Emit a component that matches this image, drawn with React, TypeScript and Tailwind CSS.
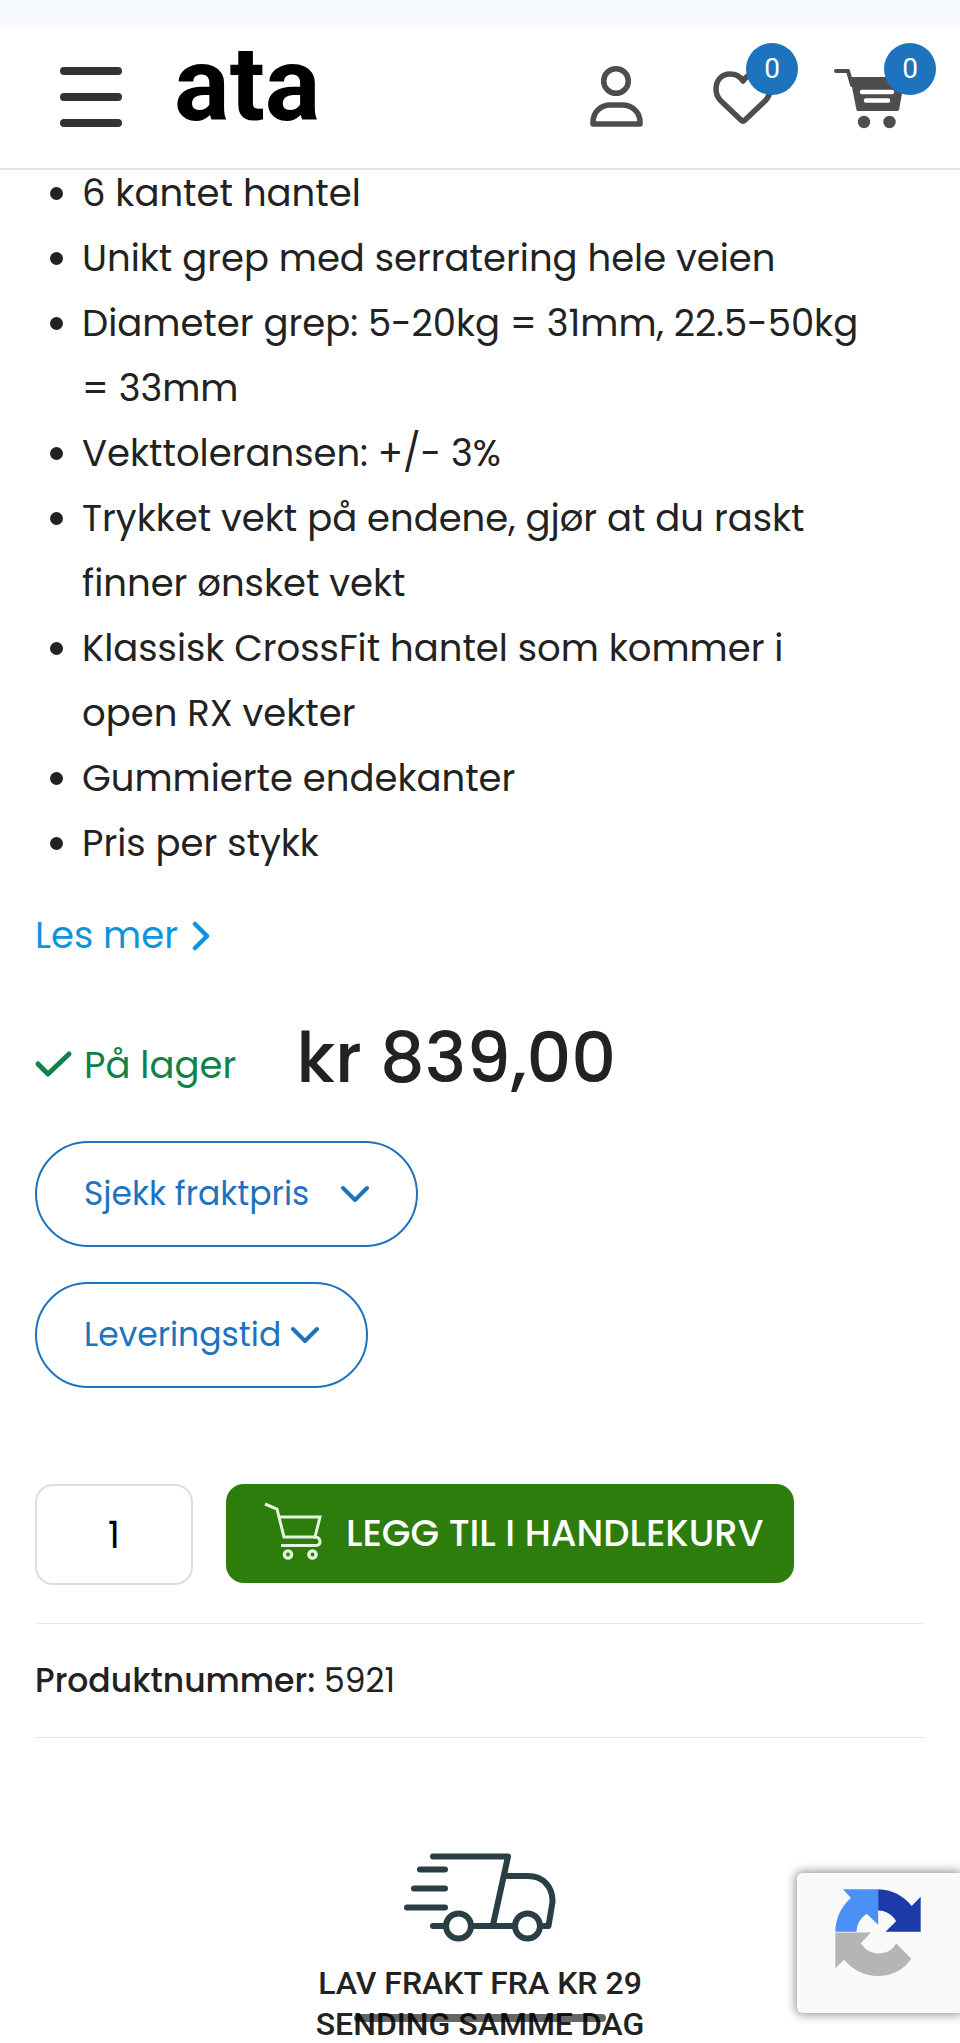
import type { ReactNode } from "react";

const features = [
  "6 kantet hantel",
  "Unikt grep med serratering hele veien",
  "Diameter grep: 5-20kg = 31mm, 22.5-50kg = 33mm",
  "Vekttoleransen: +/- 3%",
  "Trykket vekt på endene, gjør at du raskt finner ønsket vekt",
  "Klassisk CrossFit hantel som kommer i open RX vekter",
  "Gummierte endekanter",
  "Pris per stykk",
];

function Badge({ count, className }: { count: number; className: string }) {
  return (
    <span
      className={`absolute -top-[22px] flex size-[52px] items-center justify-center rounded-full bg-[#1e73be] font-['Roboto',sans-serif] text-[28px] leading-none text-white ${className}`}
    >
      {count}
    </span>
  );
}

function UserIcon() {
  return (
    <svg className="h-16 w-[54px]" viewBox="0 0 54 64" fill="none" stroke="#4d4d4d" strokeWidth="5.5" strokeLinejoin="round">
      <circle cx="26" cy="16" r="12.3" />
      <path d="M3 59 V57 C3 47 11 40 20 40 H32 C42 40 50 47 50 57 V59 Z" />
    </svg>
  );
}

function HeartIcon() {
  return (
    <svg className="h-16 w-[60px]" viewBox="0 0 60 64" fill="none" stroke="#4d4d4d" strokeWidth="5.5" strokeLinejoin="round">
      <path d="M30 16 C27 11 22 9 17 9 C9 9 3 15 3 24 C3 29 5 33 8 36 L28 55 Q30 57 32 55 L52 36 C55 33 57 29 57 24 C57 15 51 9 43 9 C38 9 33 11 30 16 Z" />
    </svg>
  );
}

function CartIcon() {
  return (
    <svg className="h-16 w-[72px]" viewBox="0 0 72 64" fill="none" strokeLinecap="round">
      <path d="M2 6 H14 L18 20" stroke="#4d4d4d" strokeWidth="4" strokeLinejoin="round" />
      <path d="M16 12 H71 L65 45 Q64.5 46 63 46 H24 Q23 46 22.5 45 Z" fill="#4d4d4d" />
      <path d="M28 27 H58 M32 35.5 H54" stroke="#fff" strokeWidth="4.5" />
      <circle cx="30" cy="57" r="6.2" fill="#4d4d4d" />
      <circle cx="55.5" cy="57" r="6.2" fill="#4d4d4d" />
    </svg>
  );
}

function ButtonCartIcon() {
  return (
    <svg className="h-[58px] w-[57px] overflow-visible" viewBox="0 0 57 58" fill="none" stroke="#e6f3df" strokeWidth="3">
      <path d="M0 -1 L12 4 L19 32 H51" />
      <path d="M15 12 H55 L50 32 C54 32 55 35 55 37 C55 39.5 53 40.5 50 40.5 H16" />
      <circle cx="23" cy="49.5" r="3.6" strokeWidth="3.4" />
      <circle cx="47.5" cy="49.5" r="3.6" strokeWidth="3.4" />
    </svg>
  );
}

function TruckIcon() {
  return (
    <svg className="h-[90px] w-[152px]" viewBox="0 0 152 90" fill="none" stroke="#2a3e45" strokeWidth="6" strokeLinecap="round" strokeLinejoin="round">
      <path d="M29 3.5 H104 L89 72" />
      <path d="M16 16.5 H41 M10 35.5 H41 M3 54.5 H41" />
      <path d="M29 73 H39 M71 73 H109 M140 73 H144.5 L148.5 49 C149 34 139 23 124 23 H102" />
      <circle cx="54.5" cy="73" r="12.5" />
      <circle cx="123.5" cy="73" r="12.5" />
    </svg>
  );
}

function RecaptchaIcon() {
  return (
    <svg className="size-[87px]" viewBox="225 145 260 262">
      <path fill="#4a90f5" d="M248 146 H354 V253 L320 220 C300 232 290 250 289 274 H225 C226 235 240 200 272 172 Z" />
      <path fill="#1c3aa9" d="M354 146 C395 147 430 165 455 196 L482 168 V274 H376 L408 242 C397 222 378 211 354 210 Z" />
      <path fill="#b5b5b5" d="M225 276 H332 L302 308 C315 328 335 339 355 339 C378 339 398 328 408 308 L454 355 C430 390 395 407 352 407 C312 406 278 390 252 358 L225 384 Z" />
    </svg>
  );
}

function ChevronDown() {
  return (
    <svg className="h-[18px] w-7" viewBox="0 0 28 18" fill="none" stroke="currentColor" strokeWidth="4" strokeLinecap="round" strokeLinejoin="round">
      <path d="M2 3 L14 15 L26 3" />
    </svg>
  );
}

function PillButton({ children, className }: { children: ReactNode; className: string }) {
  return (
    <button
      type="button"
      className={`flex h-[106px] items-center rounded-full border-2 border-[#1e73be] px-[47px] text-[33px] text-[#1e73be] ${className}`}
    >
      {children}
      <ChevronDown />
    </button>
  );
}

function Header() {
  return (
    <header className="sticky top-0 z-10 border-b-2 border-[#e4e4e4] bg-white">
      <div className="h-[25px] bg-[#f6f9fd]" />
      <div className="flex h-[143px] items-center pr-[54px] pl-[60px]">
        <button type="button" aria-label="Meny" className="flex h-[60px] w-[62px] flex-col justify-between">
          <span className="h-2 w-full rounded-full bg-[#333]" />
          <span className="h-2 w-full rounded-full bg-[#333]" />
          <span className="h-2 w-full rounded-full bg-[#333]" />
        </button>
        <a
          href="#"
          className="ml-[52px] pb-6 font-['Roboto',sans-serif] text-[104px] leading-none font-bold text-black"
        >
          ata
        </a>
        <nav className="ml-auto flex items-center">
          <a href="#" aria-label="Min side" className="mr-[69px]">
            <UserIcon />
          </a>
          <a href="#" aria-label="Ønskeliste" className="relative mr-[61px]">
            <HeartIcon />
            <Badge count={0} className="left-[33px]" />
          </a>
          <a href="#" aria-label="Handlekurv" className="relative">
            <CartIcon />
            <Badge count={0} className="left-[50px]" />
          </a>
        </nav>
      </div>
    </header>
  );
}

export default function App() {
  return (
    <div className="h-screen overflow-hidden bg-white font-['Poppins','Inter',sans-serif] text-[#222]">
      <Header />
      <main className="-mt-[9px] px-[35px]">
        <ul className="list-none pr-10 text-[37px] leading-[65px]">
          {features.map((feature) => (
            <li key={feature} className="flex pl-[15px]">
              <span className="mt-[26px] mr-[19px] size-[13px] shrink-0 rounded-full bg-[#222]" />
              <span>{feature}</span>
            </li>
          ))}
        </ul>

        <a href="#" className="mt-[27px] flex items-center gap-3.5 text-[37px] leading-[65px] text-[#0d95dc]">
          Les mer
          <svg className="h-[30px] w-[18px]" viewBox="0 0 18 30" fill="none" stroke="currentColor" strokeWidth="4.5" strokeLinecap="round" strokeLinejoin="round">
            <path d="M3 3 L15 15 L3 27" />
          </svg>
        </a>

        <div className="mt-[50px] flex items-end">
          <p className="flex items-center gap-3 text-[37px] leading-[65px] text-[#0f8247]">
            <svg className="h-[26px] w-[37px] overflow-visible" viewBox="0 0 37 26" fill="none" stroke="currentColor" strokeWidth="5" strokeLinecap="round" strokeLinejoin="round">
              <path d="M3 11 L13 21 L34 1" />
            </svg>
            På lager
          </p>
          <p className="ml-[60px] text-[70px] leading-[80px] font-medium">kr 839,00</p>
        </div>

        <div className="mt-[43px] flex flex-col items-start gap-[35px]">
          <PillButton className="gap-8">Sjekk fraktpris</PillButton>
          <PillButton className="gap-2.5">Leveringstid</PillButton>
        </div>

        <form className="mt-24 flex items-start" onSubmit={(e) => e.preventDefault()}>
          <input
            type="text"
            inputMode="numeric"
            aria-label="Antall"
            defaultValue="1"
            className="h-[101px] w-[158px] rounded-[18px] border-2 border-[#ddd] text-center text-[37px] text-black"
          />
          <button
            type="submit"
            className="ml-[33px] flex h-[99px] items-center gap-6 rounded-[18px] bg-[#2c7d0b] pr-[31px] pl-[39px] text-[37px] font-medium text-white"
          >
            <ButtonCartIcon />
            LEGG TIL I HANDLEKURV
          </button>
        </form>

        <p className="mt-[38px] border-y border-[#e8e8e8] py-8 text-[33px] leading-[49px]">
          <strong className="font-medium">Produktnummer:</strong> 5921
        </p>

        <div className="mt-[115px] flex flex-col items-center text-center font-['Roboto',sans-serif] text-[32px] leading-[41px] font-medium">
          <TruckIcon />
          <p className="mt-5">LAV FRAKT FRA KR 29</p>
          <p>SENDING SAMME DAG</p>
        </div>
      </main>

      <aside className="fixed right-0 bottom-[30px] z-10 h-[140px] w-[163px] rounded-l-md border-l-2 border-white bg-[#f9f9f9] pt-4 pl-9 shadow-[0_0_10px_2px_rgba(0,0,0,0.4)]">
        <RecaptchaIcon />
      </aside>
      <div className="fixed bottom-[21px] left-1/2 z-10 h-2 w-[252px] -translate-x-1/2 rounded-full bg-black/60" />
    </div>
  );
}
